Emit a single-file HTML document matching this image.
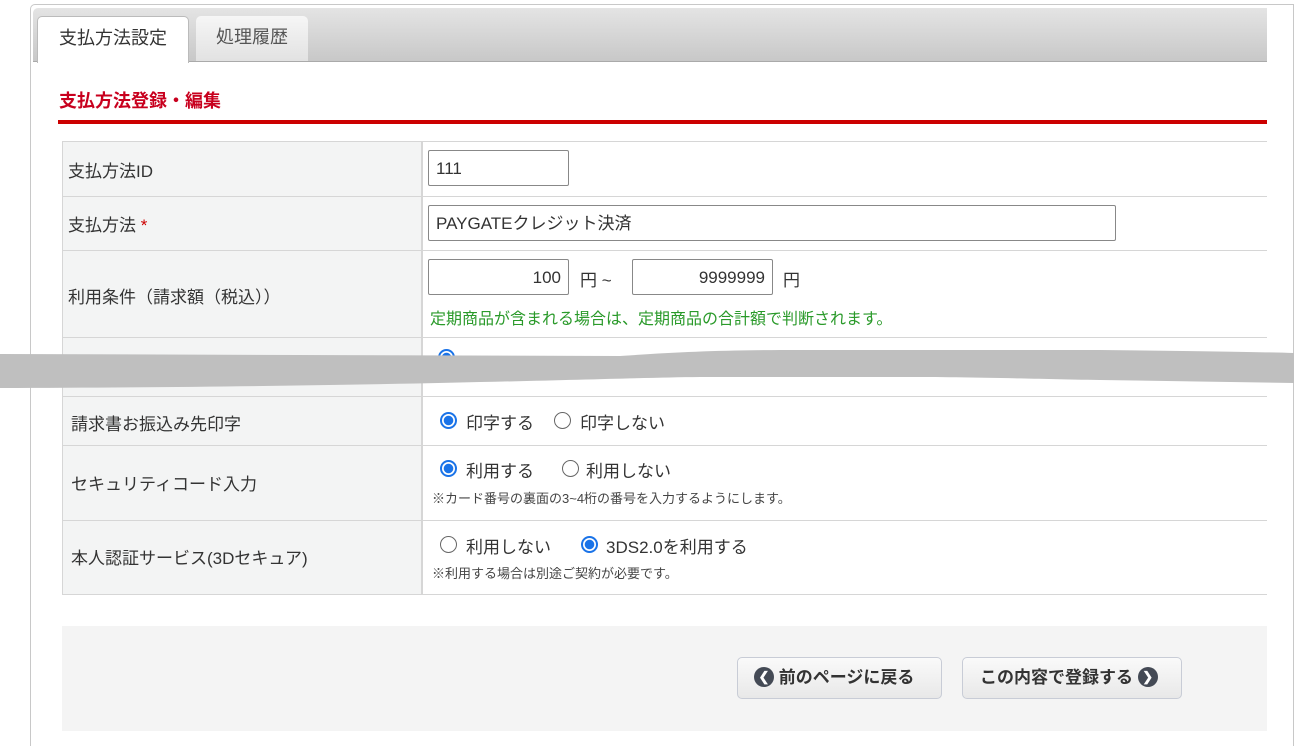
<!DOCTYPE html>
<html style="width:1294px;height:746px;overflow:hidden"><head><meta charset="utf-8"><style>
*{margin:0;padding:0;box-sizing:border-box}
body{width:1294px;height:746px;background:#fff;position:relative;overflow:hidden;font-family:"Liberation Sans","Noto Sans CJK JP",sans-serif;color:#333}
.a{position:absolute;white-space:nowrap}
.panel{left:30px;top:4px;width:1264px;height:742px;border:1px solid #c8c8c8;border-bottom:none;border-radius:5px 0 0 0}
.tabbar{left:33px;top:8px;width:1234px;height:54px;background:linear-gradient(#e4e4e4,#c8c8c8);border-radius:5px 0 0 0;border-bottom:1px solid #aaa}
.tab{top:16px;height:46px;border-radius:5px 5px 0 0;font-size:18px;line-height:42px;text-align:center}
.lbl{left:62px;width:361px;background:#f3f4f4;border:1px solid #d6d6d6;border-right:2px solid #d6d6d6}
.val{left:423px;width:844px;border-top:1px solid #d6d6d6;border-bottom:1px solid #d6d6d6}
.lt{font-size:17px;color:#333}
.inp{border:1px solid #888;border-radius:2px;background:#fff;font-size:17px;line-height:36px;padding:0 7px;height:36px}
.rad{width:17px;height:17px;border-radius:50%;border:1.5px solid #666;background:#fff}
.on{border:2px solid #1a73e8;background:radial-gradient(#1a73e8 0 4.5px,#fff 5px)}
.btn{top:657px;height:42px;border:1px solid #c8ccd6;border-radius:5px;background:linear-gradient(#fafafa,#e8e8e8);font-size:17px;line-height:40px;font-weight:bold;color:#333}
.ic{display:inline-block;width:20px;height:20px;border-radius:50%;background:#444a55;color:#fff;font-size:13px;line-height:20px;text-align:center;vertical-align:middle;margin-top:-3px}
</style></head><body>
<div class="a panel"></div>
<div class="a tabbar"></div>
<div class="a tab" style="left:37px;width:152px;background:#fff;border:1px solid #bbb;border-bottom:none;top:16px;height:47px;color:#333">支払方法設定</div>
<div class="a tab" style="left:196px;width:112px;background:linear-gradient(#f6f6f6,#e2e2e2);color:#555;height:45px">処理履歴</div>
<div class="a" style="left:59px;top:87px;font-size:18px;font-weight:bold;color:#c8001e">支払方法登録・編集</div>
<div class="a" style="left:58px;top:120px;width:1209px;height:4px;background:#cc0000"></div>

<div class="a lbl" style="top:141px;height:56px"></div><div class="a val" style="top:141px;height:56px"></div>
<div class="a lbl" style="top:196px;height:55px"></div><div class="a val" style="top:196px;height:55px"></div>
<div class="a lbl" style="top:250px;height:88px"></div><div class="a val" style="top:250px;height:88px"></div>
<div class="a lbl" style="top:337px;height:60px"></div><div class="a val" style="top:337px;height:60px"></div>
<div class="a lbl" style="top:396px;height:50px"></div><div class="a val" style="top:396px;height:50px"></div>
<div class="a lbl" style="top:445px;height:76px"></div><div class="a val" style="top:445px;height:76px"></div>
<div class="a lbl" style="top:520px;height:75px"></div><div class="a val" style="top:520px;height:75px"></div>

<div class="a lt" style="left:68px;top:157px">支払方法ID</div>
<div class="a lt" style="left:68px;top:211px">支払方法 <span style="color:#c00">*</span></div>
<div class="a lt" style="left:68px;top:283px">利用条件（請求額（税込））</div>
<div class="a lt" style="left:71px;top:410px">請求書お振込み先印字</div>
<div class="a lt" style="left:71px;top:470px">セキュリティコード入力</div>
<div class="a lt" style="left:71px;top:544px">本人認証サービス(3Dセキュア)</div>

<div class="a inp" style="left:428px;top:150px;width:141px">111</div>
<div class="a inp" style="left:428px;top:205px;width:688px">PAYGATEクレジット決済</div>
<div class="a inp" style="left:428px;top:259px;width:141px;text-align:right">100</div>
<div class="a lt" style="left:580px;top:266px">円 ~</div>
<div class="a inp" style="left:632px;top:259px;width:141px;text-align:right">9999999</div>
<div class="a lt" style="left:783px;top:266px">円</div>
<div class="a" style="left:430px;top:305px;font-size:16px;color:#2a9a2a">定期商品が含まれる場合は、定期商品の合計額で判断されます。</div>
<div class="a rad on" style="left:438px;top:349px"></div>

<div class="a rad on" style="left:440px;top:412px"></div><div class="a lt" style="left:466px;top:409px">印字する</div>
<div class="a rad" style="left:554px;top:412px"></div><div class="a lt" style="left:580px;top:409px">印字しない</div>
<div class="a rad on" style="left:440px;top:460px"></div><div class="a lt" style="left:466px;top:457px">利用する</div>
<div class="a rad" style="left:562px;top:460px"></div><div class="a lt" style="left:586px;top:457px">利用しない</div>
<div class="a" style="left:432px;top:488px;font-size:13px;color:#444">※カード番号の裏面の3~4桁の番号を入力するようにします。</div>
<div class="a rad" style="left:440px;top:536px"></div><div class="a lt" style="left:466px;top:533px">利用しない</div>
<div class="a rad on" style="left:581px;top:536px"></div><div class="a lt" style="left:606px;top:533px">3DS2.0を利用する</div>
<div class="a" style="left:432px;top:563px;font-size:13px;color:#444">※利用する場合は別途ご契約が必要です。</div>

<svg class="a" style="left:0;top:340px" width="1294" height="60"><path d="M0 14 L620 16 C680 12 720 10 800 10 L1100 10 C1200 11 1260 12 1294 13 L1294 43 L1100 40 C1000 38 960 37 900 37 L700 37 C600 38 400 47 0 48 Z" fill="#bfbfbf"/></svg>

<div class="a" style="left:62px;top:626px;width:1205px;height:105px;background:#f4f4f4"></div>
<div class="a btn" style="left:737px;width:205px;padding-left:16px"><span class="ic">&#10094;</span> 前のページに戻る</div>
<div class="a btn" style="left:962px;width:220px;padding-left:17px">この内容で登録する <span class="ic">&#10095;</span></div>
</body></html>
